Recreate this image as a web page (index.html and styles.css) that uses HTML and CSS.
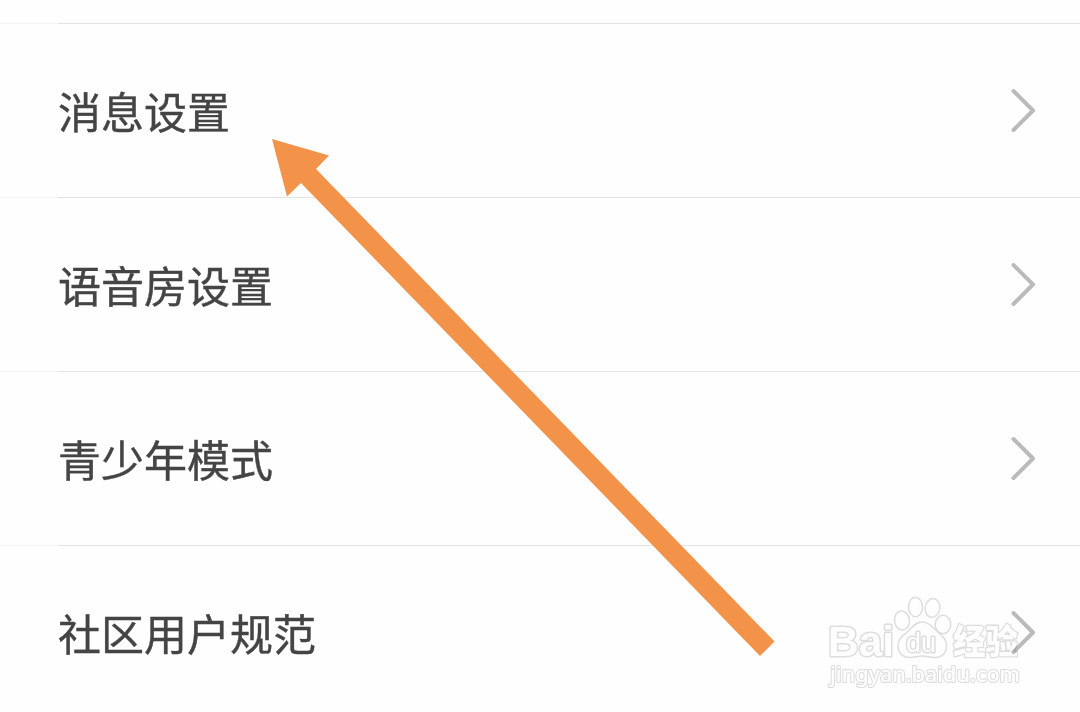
FILE: index.html
```html
<!DOCTYPE html>
<html lang="zh-CN">

<head>
    <meta charset="UTF-8">
    <meta name="viewport" content="width=device-width, initial-scale=1.0">
    <title>设置</title>
    <link rel="stylesheet" href="styles.css">
</head>

<body>
    <div class="settings-page">
        <ul class="settings-list">
            <li class="settings-item">
                <span class="item-label">消息设置</span>
                <svg class="item-arrow" viewBox="0 0 28 46"><path d="M4.500 3 L24 22.500 L4.500 42" /></svg>
            </li>
            <li class="settings-item">
                <span class="item-label">语音房设置</span>
                <svg class="item-arrow" viewBox="0 0 28 46"><path d="M4.500 3 L24 22.500 L4.500 42" /></svg>
            </li>
            <li class="settings-item">
                <span class="item-label">青少年模式</span>
                <svg class="item-arrow" viewBox="0 0 28 46"><path d="M4.500 3 L24 22.500 L4.500 42" /></svg>
            </li>
            <li class="settings-item">
                <span class="item-label">社区用户规范</span>
                <svg class="item-arrow" viewBox="0 0 28 46"><path d="M4.500 3 L24 22.500 L4.500 42" /></svg>
            </li>
        </ul>

        <!-- 指示箭头 -->
        <svg class="pointer" viewBox="0 0 1080 712">
            <path d="M272 139 L329 155.500 L316 169 L774.500 641.500 L760 656 L301 183 L287 196.500 Z" />
        </svg>

        <!-- 水印 -->
        <svg class="watermark" viewBox="0 0 240 115">
            <text class="mark-name" x="18" y="71" textLength="66" lengthAdjust="spacingAndGlyphs">Bai</text>
            <g class="mark-paw">
                <ellipse cx="92" cy="35.500" rx="7.500" ry="9.500" transform="rotate(-8 92 35.500)" />
                <ellipse cx="105.500" cy="22" rx="7" ry="9.700" />
                <ellipse cx="122.500" cy="23" rx="7.300" ry="9.500" transform="rotate(10 122.500 23)" />
                <ellipse cx="133" cy="39.500" rx="7.800" ry="9.300" />
                <path d="M112 37 C120 37 124 44 130 49 C135 53 137 58 136.500 62 C136 69 131 73 124 72.500 C119 72 116 71 112 71 C108 71 105 72.500 100 72.500 C93 72.500 88 68 88 61 C88 56 91 51 95 49 C101 45 104 37 112 37 Z" />
            </g>
            <text class="mark-du" x="96" y="67" textLength="30" lengthAdjust="spacingAndGlyphs">du</text>
            <text class="mark-cn" x="143" y="69" textLength="65" lengthAdjust="spacingAndGlyphs">经验</text>
            <text class="mark-url" x="20" y="97" textLength="190" lengthAdjust="spacingAndGlyphs">jingyan.baidu.com</text>
        </svg>
    </div>
</body>

</html>
```
FILE: styles.css
```css
:root {
    --text-color: #444;
    --border-color: #e3e3e3;
    --border-light: #f5f5f5;
    --arrow-color: #bababa;
    --pointer-color: #f3934a;
    --mark-color: #dedede;
}

* {
    box-sizing: border-box;
    margin: 0;
    padding: 0;
}

body {
    font-family: "Noto Sans CJK SC", sans-serif;
    color: var(--text-color);
    background-color: #fefefe;
    overflow: hidden;
}

.settings-page {
    position: relative;
    height: 712px;
    padding-top: 23px;
    overflow: hidden;
}

.settings-list {
    list-style: none;
}

.settings-item {
    display: flex;
    justify-content: space-between;
    align-items: center;
    height: 174px;
    padding: 1px 43px 0 58px;
    /* 左侧缩进部分的分隔线颜色更浅 */
    background: linear-gradient(to right, var(--border-light) 58px, var(--border-color) 58px) top / 100% 1px no-repeat;
}

.item-label {
    padding-bottom: 2px;
    font-size: 43px;
    line-height: 60px;
    -webkit-text-stroke: 0.4px var(--text-color);
}

.item-arrow {
    width: 28px;
    height: 46px;
}

.item-arrow path {
    fill: none;
    stroke: var(--arrow-color);
    stroke-width: 4;
    stroke-linecap: round;
    stroke-linejoin: round;
}

.pointer {
    position: absolute;
    top: 0;
    left: 0;
    width: 1080px;
    height: 712px;
    fill: var(--pointer-color);
}

/* 水印样式 */
.watermark {
    position: absolute;
    top: 585px;
    left: 810px;
    width: 240px;
    height: 115px;
    fill: #fff;
    stroke: var(--mark-color);
    stroke-width: 1.5;
    stroke-linejoin: round;
    mix-blend-mode: multiply;
}

.mark-name {
    font-family: "Liberation Sans", Arial, sans-serif;
    font-size: 43px;
    font-weight: bold;
    paint-order: stroke;
    stroke-width: 3;
}

.mark-du {
    font-family: "Liberation Sans", Arial, sans-serif;
    font-size: 27px;
    paint-order: stroke;
    stroke-width: 3;
}

.mark-cn {
    font-family: "Noto Sans CJK SC", sans-serif;
    font-size: 34px;
    font-weight: 900;
    paint-order: stroke;
    stroke-width: 2.6;
}

.mark-url {
    font-family: "Noto Sans", sans-serif;
    font-size: 22px;
    font-weight: 500;
    paint-order: stroke;
    stroke-width: 2.2;
}
```
